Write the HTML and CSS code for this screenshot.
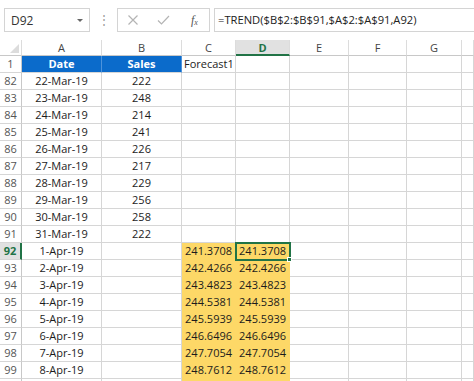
FILE: index.html
```html
<!DOCTYPE html>
<html>
<head>
<meta charset="utf-8">
<link rel="stylesheet" href="styles.css">
</head>
<body>
<div class="fbar">
  <div class="namebox"><span>D92</span><span class="caret"></span></div>
  <div class="grip">⋮</div>
  <div class="btns">
    <svg class="ico" width="12" height="12" viewBox="0 0 12 12"><path d="M1.5 1.5 L10.5 10.5 M10.5 1.5 L1.5 10.5" stroke="#b4b4b4" stroke-width="1.2" fill="none"/></svg>
    <svg class="ico" width="13" height="12" viewBox="0 0 13 12"><path d="M1 6.5 L4.5 10 L12 2" stroke="#b4b4b4" stroke-width="1.2" fill="none"/></svg>
    <span class="fx"><i>f</i><sub>x</sub></span>
  </div>
  <div class="formula">=TREND($B$2:$B$91,$A$2:$A$91,A92)</div>
</div>
<div class="sheet">
  <div class="ch corner"><span class="tri"></span></div><div class="ch">A</div><div class="ch">B</div><div class="ch">C</div><div class="ch sel">D</div><div class="ch">E</div><div class="ch">F</div><div class="ch">G</div><div class="ch"></div>

  <div class="rh">1</div><div class="c hd">Date</div><div class="c hd">Sales</div><div class="c l">Forecast1</div><div class="c"></div><div class="c"></div><div class="c"></div><div class="c"></div><div class="c"></div>

  <div class="rh">82</div><div class="c m">22-Mar-19</div><div class="c m">222</div><div class="c"></div><div class="c"></div><div class="c"></div><div class="c"></div><div class="c"></div><div class="c"></div>
  <div class="rh">83</div><div class="c m">23-Mar-19</div><div class="c m">248</div><div class="c"></div><div class="c"></div><div class="c"></div><div class="c"></div><div class="c"></div><div class="c"></div>
  <div class="rh">84</div><div class="c m">24-Mar-19</div><div class="c m">214</div><div class="c"></div><div class="c"></div><div class="c"></div><div class="c"></div><div class="c"></div><div class="c"></div>
  <div class="rh">85</div><div class="c m">25-Mar-19</div><div class="c m">241</div><div class="c"></div><div class="c"></div><div class="c"></div><div class="c"></div><div class="c"></div><div class="c"></div>
  <div class="rh">86</div><div class="c m">26-Mar-19</div><div class="c m">226</div><div class="c"></div><div class="c"></div><div class="c"></div><div class="c"></div><div class="c"></div><div class="c"></div>
  <div class="rh">87</div><div class="c m">27-Mar-19</div><div class="c m">217</div><div class="c"></div><div class="c"></div><div class="c"></div><div class="c"></div><div class="c"></div><div class="c"></div>
  <div class="rh">88</div><div class="c m">28-Mar-19</div><div class="c m">229</div><div class="c"></div><div class="c"></div><div class="c"></div><div class="c"></div><div class="c"></div><div class="c"></div>
  <div class="rh">89</div><div class="c m">29-Mar-19</div><div class="c m">256</div><div class="c"></div><div class="c"></div><div class="c"></div><div class="c"></div><div class="c"></div><div class="c"></div>
  <div class="rh">90</div><div class="c m">30-Mar-19</div><div class="c m">258</div><div class="c"></div><div class="c"></div><div class="c"></div><div class="c"></div><div class="c"></div><div class="c"></div>
  <div class="rh">91</div><div class="c m">31-Mar-19</div><div class="c m">222</div><div class="c"></div><div class="c"></div><div class="c"></div><div class="c"></div><div class="c"></div><div class="c"></div>

  <div class="rh sel">92</div><div class="c m">1-Apr-19</div><div class="c"></div><div class="c y">241.3708</div><div class="c y active">241.3708</div><div class="c"></div><div class="c"></div><div class="c"></div><div class="c"></div>
  <div class="rh">93</div><div class="c m">2-Apr-19</div><div class="c"></div><div class="c y">242.4266</div><div class="c y">242.4266</div><div class="c"></div><div class="c"></div><div class="c"></div><div class="c"></div>
  <div class="rh">94</div><div class="c m">3-Apr-19</div><div class="c"></div><div class="c y">243.4823</div><div class="c y">243.4823</div><div class="c"></div><div class="c"></div><div class="c"></div><div class="c"></div>
  <div class="rh">95</div><div class="c m">4-Apr-19</div><div class="c"></div><div class="c y">244.5381</div><div class="c y">244.5381</div><div class="c"></div><div class="c"></div><div class="c"></div><div class="c"></div>
  <div class="rh">96</div><div class="c m">5-Apr-19</div><div class="c"></div><div class="c y">245.5939</div><div class="c y">245.5939</div><div class="c"></div><div class="c"></div><div class="c"></div><div class="c"></div>
  <div class="rh">97</div><div class="c m">6-Apr-19</div><div class="c"></div><div class="c y">246.6496</div><div class="c y">246.6496</div><div class="c"></div><div class="c"></div><div class="c"></div><div class="c"></div>
  <div class="rh">98</div><div class="c m">7-Apr-19</div><div class="c"></div><div class="c y">247.7054</div><div class="c y">247.7054</div><div class="c"></div><div class="c"></div><div class="c"></div><div class="c"></div>
  <div class="rh">99</div><div class="c m">8-Apr-19</div><div class="c"></div><div class="c y">248.7612</div><div class="c y">248.7612</div><div class="c"></div><div class="c"></div><div class="c"></div><div class="c"></div>
  <div class="rh"></div><div class="c"></div><div class="c"></div><div class="c y"></div><div class="c y"></div><div class="c"></div><div class="c"></div><div class="c"></div><div class="c"></div>
</div>
</body>
</html>
```
FILE: styles.css
```css
html, body {
  margin: 0;
  padding: 0;
  background: #fff;
  overflow: hidden;
}
body {
  width: 474px;
  height: 381px;
  font-family: "Open Sans", "Noto Sans", sans-serif;
  font-size: 11px;
  color: #1c1c1c;
}
.fbar {
  height: 40px;
  display: flex;
  align-items: flex-start;
  padding-top: 8px;
  box-sizing: border-box;
}
.namebox {
  margin-left: 4px;
  width: 86px;
  height: 24px;
  box-sizing: border-box;
  border: 1px solid #d4d4d4;
  display: flex;
  align-items: center;
  justify-content: space-between;
  padding: 0 6px 0 6px;
  font-size: 12px;
  color: #333;
}
.caret {
  width: 0;
  height: 0;
  border-left: 3px solid transparent;
  border-right: 3px solid transparent;
  border-top: 3px solid #666;
}
.grip {
  width: 27px;
  text-align: center;
  color: #9a9a9a;
  font-size: 12px;
  line-height: 24px;
}
.btns {
  width: 93px;
  height: 24px;
  box-sizing: border-box;
  border: 1px solid #d4d4d4;
  display: flex;
  align-items: center;
  padding-left: 9px;
  gap: 18px;
}
.fx {
  font-family: "Liberation Serif", serif;
  font-size: 12px;
  color: #555;
  margin-left: 3px;
}
.fx sub { font-size: 8px; font-style: italic; vertical-align: -1px; }
.formula {
  margin-left: 4px;
  flex: 1;
  height: 24px;
  box-sizing: border-box;
  border: 1px solid #d4d4d4;
  border-right: none;
  padding-left: 3px;
  line-height: 22px;
  font-size: 11.2px;
  color: #222;
  white-space: nowrap;
}
.sheet {
  display: grid;
  grid-template-columns: 22px 80px 80px 54px 54px 59px 58px 55px 1fr;
  grid-template-rows: 16px;
  grid-auto-rows: 17px;
}
.sheet > div {
  box-sizing: border-box;
  border-right: 1px solid #d6d6d6;
  border-bottom: 1px solid #d6d6d6;
  line-height: 16px;
  white-space: nowrap;
  overflow: visible;
}
.ch {
  text-align: center;
  color: #444;
  border-bottom-color: #c8c8c8 !important;
  border-right-color: #dcdcdc !important;
  line-height: 15px !important;
  font-size: 11px;
}
.ch.sel {
  background: #e1e1e1;
  color: #217346;
  font-weight: 700;
  border-bottom: 2px solid #217346 !important;
}
.corner {
  position: relative;
}
.tri {
  position: absolute;
  right: 2px;
  bottom: 2px;
  width: 0;
  height: 0;
  border-left: 9px solid transparent;
  border-bottom: 9px solid #dcdcdc;
}
.rh {
  text-align: center;
  color: #555;
  border-right-color: #c8c8c8 !important;
}
.rh.sel {
  background: #e1e1e1;
  color: #217346;
  font-weight: 700;
  border-right: 2px solid #217346 !important;
}
.c.m { text-align: center; }
.c.l { padding-left: 2px; }
.c.hd {
  background: #0b6bcb;
  color: #fff;
  font-weight: 700;
  text-align: center;
  border-right-color: #4d93dc;
  border-bottom-color: #d6d6d6;
}
.c.y {
  background: #fdd867;
  border-right-color: #fdd867;
  border-bottom-color: #fdd867;
  text-align: right;
  padding-right: 3px;
}
.active {
  position: relative;
  outline: 2px solid #217346;
  outline-offset: -1px;
}
.active::after {
  content: "";
  position: absolute;
  right: -3px;
  bottom: -3px;
  width: 5px;
  height: 5px;
  background: #217346;
  border: 1px solid #fff;
  box-sizing: border-box;
}
```
